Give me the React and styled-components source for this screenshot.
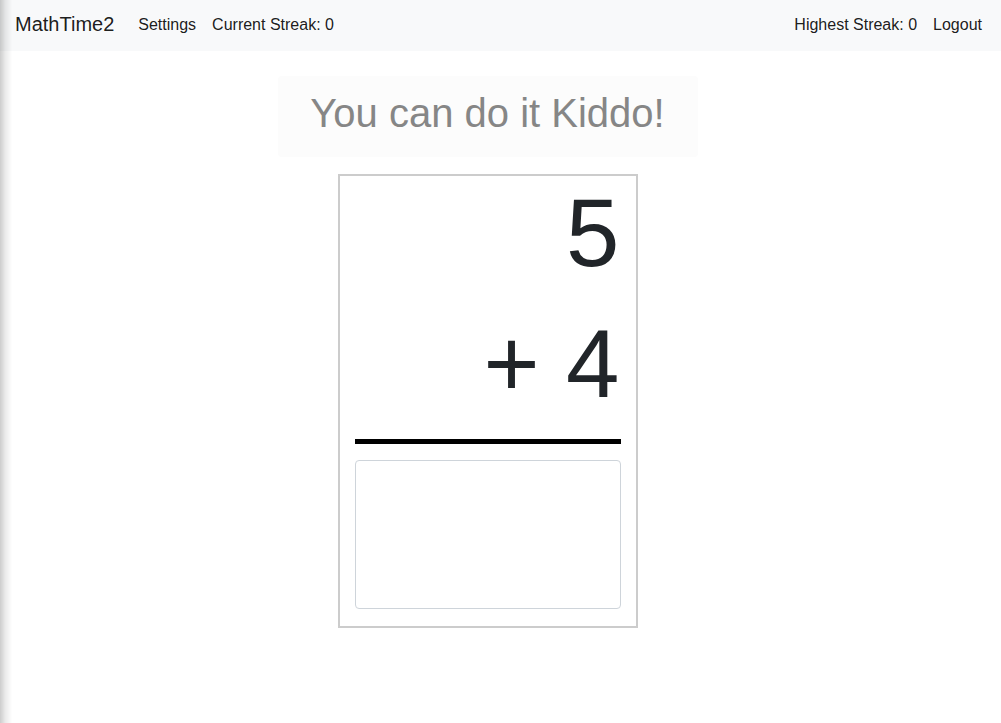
import React, { useState } from "react";
import styled, { createGlobalStyle } from "styled-components";

const GlobalStyle = createGlobalStyle`
  html, body {
    margin: 0;
    padding: 0;
    background: #fff;
    font-family: "Liberation Sans", Arial, sans-serif;
    color: #212529;
  }
`;

const Page = styled.div`
  min-height: 723px;
  &::before {
    content: "";
    position: fixed;
    top: 0;
    left: 0;
    bottom: 0;
    width: 12px;
    background: linear-gradient(
      to right,
      rgba(0, 0, 0, 0.2),
      rgba(0, 0, 0, 0.08) 45%,
      rgba(0, 0, 0, 0)
    );
    pointer-events: none;
  }
`;

const Navbar = styled.nav`
  display: flex;
  align-items: center;
  height: 51px;
  box-sizing: border-box;
  padding: 0 11px 2px 15px;
  background: #f8f9fa;
`;

const Brand = styled.a`
  font-size: 20px;
  color: rgba(0, 0, 0, 0.9);
  margin-right: 16px;
  text-decoration: none;
`;

const NavGroup = styled.div`
  display: flex;
  align-items: center;
  margin-left: ${(p) => (p.$right ? "auto" : "0")};
`;

const NavItem = styled.a`
  font-size: 16px;
  padding: 0 8px;
  color: rgba(0, 0, 0, 0.9);
  text-decoration: none;
  cursor: ${(p) => (p.$link ? "pointer" : "default")};
`;

const Main = styled.main`
  display: flex;
  flex-direction: column;
  align-items: center;
  padding: 25px 26px 0 0;
`;

const Banner = styled.div`
  width: 420px;
  box-sizing: border-box;
  padding: 13px 0 20px;
  background: #fcfcfc;
  border-radius: 4px;
  text-align: center;
`;

const BannerText = styled.h1`
  margin: 0;
  font-size: 40px;
  font-weight: 400;
  line-height: 48px;
  color: #868686;
`;

const Card = styled.div`
  margin-top: 17px;
  width: 300px;
  height: 454px;
  box-sizing: border-box;
  border: 2px solid #cccccc;
  padding: 12px 15px 16px;
  display: flex;
  flex-direction: column;
`;

const Operand = styled.div`
  font-size: 96px;
  line-height: 90px;
  height: 90px;
  padding-right: 1px;
  text-align: right;
  color: #212529;
  margin-bottom: ${(p) => p.$gap}px;
`;

const Rule = styled.div`
  height: 5px;
  background: #000;
  margin-bottom: 16px;
`;

const Answer = styled.input`
  height: 149px;
  box-sizing: border-box;
  width: 100%;
  border: 1px solid #ced4da;
  border-radius: 4px;
  font-size: 80px;
  font-family: inherit;
  text-align: right;
  padding: 0 12px;
  outline: none;
`;

export default function App() {
  const [answer, setAnswer] = useState("");
  return (
    <Page>
      <GlobalStyle />
      <Navbar>
        <Brand>MathTime2</Brand>
        <NavGroup>
          <NavItem $link>Settings</NavItem>
          <NavItem>Current Streak: 0</NavItem>
        </NavGroup>
        <NavGroup $right>
          <NavItem>Highest Streak: 0</NavItem>
          <NavItem $link>Logout</NavItem>
        </NavGroup>
      </Navbar>
      <Main>
        <Banner>
          <BannerText>You can do it Kiddo!</BannerText>
        </Banner>
        <Card>
          <Operand $gap={41}>5</Operand>
          <Operand $gap={30}>+ 4</Operand>
          <Rule />
          <Answer value={answer} onChange={(e) => setAnswer(e.target.value)} />
        </Card>
      </Main>
    </Page>
  );
}
